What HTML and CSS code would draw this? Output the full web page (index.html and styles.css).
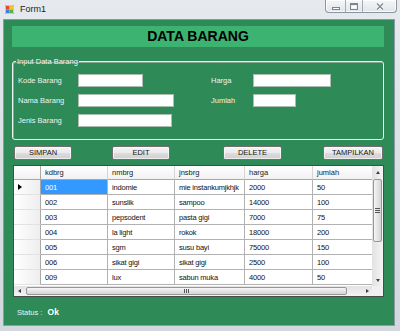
FILE: index.html
```html
<!DOCTYPE html>
<html lang="id">
<head>
    <meta charset="UTF-8">
    <title>Form1</title>
    <link rel="stylesheet" href="styles.css">
</head>
<body>
    <div class="window">
        <div class="titlebar">
            <svg class="app-icon" width="9" height="9" viewBox="0 0 9 9">
                <rect x="0" y="0" width="9" height="9" fill="#f4f4f4" stroke="#7d8a96" stroke-width="0.8"/>
                <rect x="1" y="1" width="3.5" height="3.5" fill="#e2462c"/>
                <rect x="4.5" y="1" width="3.5" height="3.5" fill="#f3c52a"/>
                <rect x="1" y="4.5" width="3.5" height="3.5" fill="#3a7fd6"/>
                <rect x="4.5" y="4.5" width="3.5" height="3.5" fill="#58b24a"/>
            </svg>
            <span class="title">Form1</span>
            <div class="caption-buttons">
                <span class="cap cap-min"><span class="glyph-min"></span></span>
                <span class="cap cap-max"><span class="glyph-max"></span></span>
                <span class="cap cap-close">
                    <svg width="8" height="7" viewBox="0 0 8 7">
                        <path d="M1 0.5 L7 6.5 M7 0.5 L1 6.5" stroke="#ffffff" stroke-width="2.6"/>
                        <path d="M1 0.5 L7 6.5 M7 0.5 L1 6.5" stroke="#7b8590" stroke-width="1.3"/>
                    </svg>
                </span>
            </div>
        </div>

        <div class="client">
            <div class="banner">DATA BARANG</div>

            <fieldset class="groupbox">
                <legend>Input Data Barang</legend>
                <div class="fields">
                    <label>Kode Barang</label>
                    <input type="text" class="txt txt-kode">
                    <label>Harga</label>
                    <input type="text" class="txt txt-harga">

                    <label>Nama Barang</label>
                    <input type="text" class="txt txt-nama">
                    <label>Jumlah</label>
                    <input type="text" class="txt txt-jumlah">

                    <label>Jenis Barang</label>
                    <input type="text" class="txt txt-jenis">
                </div>
            </fieldset>

            <div class="buttons">
                <button class="btn">SIMPAN</button>
                <button class="btn btn-edit">EDIT</button>
                <button class="btn btn-delete">DELETE</button>
                <button class="btn btn-tampil">TAMPILKAN</button>
            </div>

            <div class="datagrid">
                <div class="grid-body">
                    <table>
                        <colgroup>
                            <col class="c-head">
                            <col class="c-kd">
                            <col class="c-nm">
                            <col class="c-jns">
                            <col class="c-hrg">
                            <col class="c-jml">
                        </colgroup>
                        <thead>
                            <tr>
                                <th class="corner"></th>
                                <th>kdbrg</th>
                                <th>nmbrg</th>
                                <th>jnsbrg</th>
                                <th>harga</th>
                                <th>jumlah</th>
                            </tr>
                        </thead>
                        <tbody>
                            <tr>
                                <td class="rowhead"><span class="current"></span></td>
                                <td class="selected">001</td>
                                <td>indomie</td>
                                <td>mie instankumjkhjk</td>
                                <td>2000</td>
                                <td>50</td>
                            </tr>
                            <tr>
                                <td class="rowhead"></td>
                                <td>002</td>
                                <td>sunslik</td>
                                <td>sampoo</td>
                                <td>14000</td>
                                <td>100</td>
                            </tr>
                            <tr>
                                <td class="rowhead"></td>
                                <td>003</td>
                                <td>pepsodent</td>
                                <td>pasta gigi</td>
                                <td>7000</td>
                                <td>75</td>
                            </tr>
                            <tr>
                                <td class="rowhead"></td>
                                <td>004</td>
                                <td>la light</td>
                                <td>rokok</td>
                                <td>18000</td>
                                <td>200</td>
                            </tr>
                            <tr>
                                <td class="rowhead"></td>
                                <td>005</td>
                                <td>sgm</td>
                                <td>susu bayi</td>
                                <td>75000</td>
                                <td>150</td>
                            </tr>
                            <tr>
                                <td class="rowhead"></td>
                                <td>006</td>
                                <td>sikat gigi</td>
                                <td>sikat gigi</td>
                                <td>2500</td>
                                <td>100</td>
                            </tr>
                            <tr>
                                <td class="rowhead"></td>
                                <td>009</td>
                                <td>lux</td>
                                <td>sabun muka</td>
                                <td>4000</td>
                                <td>50</td>
                            </tr>
                        </tbody>
                    </table>
                </div>

                <div class="vscroll">
                    <span class="arrow"><span class="tri-up"></span></span>
                    <div class="vtrack">
                        <div class="vthumb"><span class="grip-h"></span></div>
                    </div>
                    <span class="arrow"><span class="tri-down"></span></span>
                </div>

                <div class="hscroll">
                    <span class="arrow"><span class="tri-left"></span></span>
                    <div class="htrack">
                        <div class="hthumb"><span class="grip-v"></span></div>
                    </div>
                    <span class="arrow"><span class="tri-right"></span></span>
                </div>

                <div class="scroll-corner"></div>
            </div>

            <div class="status">Status : <span class="status-value">Ok</span></div>
        </div>
    </div>
</body>
</html>
```

FILE: styles.css
```css
* {
    box-sizing: border-box;
}

body {
    margin: 0;
    font-family: "Liberation Sans", Arial, sans-serif;
    font-size: 8px;
    background: #ffffff;
}

.window {
    width: 400px;
    height: 331px;
    display: flex;
    flex-direction: column;
    overflow: hidden;
    background: linear-gradient(#e6eaee, #dde2e7 40%, #d2d8de);
}

/* title bar */

.titlebar {
    height: 20px;
    display: flex;
    align-items: flex-start;
    flex-shrink: 0;
}

.app-icon {
    margin: 5px 0 0 5px;
}

.title {
    margin: 4px 0 0 6px;
    font-size: 9px;
    line-height: 11px;
    color: #1b1b1b;
}

.caption-buttons {
    margin-left: auto;
    margin-right: 3px;
    height: 13px;
    display: flex;
    border: 1px solid #8d959e;
    border-top: none;
    border-radius: 0 0 4px 4px;
    background: linear-gradient(#f5f7f9, #dfe5ea);
    box-shadow: inset 0 0 0 1px rgba(255, 255, 255, 0.7);
    overflow: hidden;
}

.cap {
    display: flex;
    align-items: center;
    justify-content: center;
    height: 100%;
}

.cap-min {
    width: 19px;
}

.cap-max {
    width: 17px;
    border-left: 1px solid #a3abb4;
}

.cap-close {
    width: 34px;
    border-left: 1px solid #a3abb4;
}

.glyph-min {
    width: 8px;
    height: 3px;
    margin-top: 5px;
    background: #ffffff;
    border: 1px solid #7b8590;
}

.glyph-max {
    width: 8px;
    height: 7px;
    border: 1px solid #7b8590;
    border-top-width: 2px;
    background: #ffffff;
    box-shadow: inset 0 0 0 1px #eef1f4;
}

/* client area */

.client {
    margin: 0 6px 0 4px;
    height: 305px;
    display: flex;
    flex-direction: column;
    background: #2e8b57;
    box-shadow: 0 0 0 1px #8d99a4;
}

.banner {
    margin: 6px 10px 0 8px;
    height: 21px;
    background: #3cb371;
    color: #000000;
    font-size: 14px;
    font-weight: bold;
    line-height: 21px;
    text-align: center;
}

.groupbox {
    margin: 10px 10px 0 8px;
    padding: 8px 0 12px 5px;
    border: 1px solid #eef3ef;
    border-radius: 3px;
    box-shadow: inset 1px 1px 0 #87a894;
    min-width: 0;
}

.groupbox legend {
    margin-left: -2px;
    padding: 0 1px;
    font-size: 7.5px;
    line-height: 9px;
    color: #f4f4f4;
}

.fields {
    display: grid;
    grid-template-columns: 60px 133px 42px 1fr;
    grid-auto-rows: 13px;
    row-gap: 7px;
    align-items: center;
}

.fields label {
    font-size: 7.5px;
    color: #f2f2f2;
}

.txt {
    height: 13px;
    margin: 0;
    padding: 0;
    border: 1px solid #a9bdb0;
    background: #ffffff;
}

.txt-kode {
    width: 65px;
}

.txt-nama {
    width: 96px;
}

.txt-jenis {
    width: 94px;
}

.txt-harga {
    width: 78px;
}

.txt-jumlah {
    width: 43px;
}

/* buttons */

.buttons {
    margin-top: 6px;
    padding-left: 10px;
    display: flex;
}

.btn {
    width: 58px;
    height: 14px;
    margin: 0;
    padding: 0;
    border: 1px solid #707070;
    border-radius: 2px;
    background: linear-gradient(#f3f3f3 0%, #ebebeb 50%, #dddddd 51%, #cfcfcf 100%);
    box-shadow: inset 0 0 0 1px rgba(255, 255, 255, 0.6);
    font-family: "Liberation Sans", Arial, sans-serif;
    font-size: 7.5px;
    line-height: 12px;
    color: #151515;
}

.btn-edit {
    margin-left: 40px;
}

.btn-delete {
    margin-left: 53px;
    width: 59px;
}

.btn-tampil {
    margin-left: 41px;
    width: 60px;
}

/* data grid */

.datagrid {
    margin: 5px 10px 0 9px;
    height: 132px;
    display: grid;
    grid-template-columns: 1fr 11px;
    grid-template-rows: 1fr 10px;
    border: 1px solid #4a4a4a;
    background: #ababab;
}

.grid-body {
    overflow: hidden;
    background: #ffffff;
}

.grid-body table {
    width: 379px;
    table-layout: fixed;
    border-collapse: separate;
    border-spacing: 0;
}

.c-head {
    width: 27px;
}

.c-kd {
    width: 67px;
}

.c-nm {
    width: 67px;
}

.c-jns {
    width: 70px;
}

.c-hrg {
    width: 68px;
}

.c-jml {
    width: 80px;
}

.grid-body th {
    height: 14px;
    padding: 0 0 0 4px;
    border-right: 1px solid #d6d6d6;
    border-bottom: 1px solid #a8a8a8;
    background: linear-gradient(#ffffff, #f1f1f1);
    font-weight: normal;
    font-size: 7.5px;
    text-align: left;
    color: #1a1a1a;
    white-space: nowrap;
    overflow: hidden;
}

.grid-body th.corner {
    border-right-color: #a8a8a8;
}

.grid-body td {
    height: 15px;
    padding: 0 0 0 4px;
    border-right: 1px solid #b2b2b2;
    border-bottom: 1px solid #b2b2b2;
    font-size: 7.5px;
    letter-spacing: -0.2px;
    color: #111111;
    white-space: nowrap;
    overflow: hidden;
}

.grid-body td.rowhead {
    padding-left: 4px;
    border-right-color: #a8a8a8;
    border-bottom-color: #e2e2e2;
    background: linear-gradient(to right, #ffffff, #eeeeee);
}

.grid-body td.selected {
    background: #3399ff;
    color: #ffffff;
}

.current {
    display: block;
    width: 0;
    height: 0;
    border-top: 3px solid transparent;
    border-bottom: 3px solid transparent;
    border-left: 4px solid #000000;
}

/* scrollbars */

.vscroll {
    display: flex;
    flex-direction: column;
    background: linear-gradient(to right, #e2e2e2, #f4f4f4);
}

.hscroll {
    display: flex;
    background: linear-gradient(#e2e2e2, #f4f4f4);
}

.vscroll .arrow {
    height: 12px;
    display: flex;
    align-items: center;
    justify-content: center;
    flex-shrink: 0;
}

.hscroll .arrow {
    width: 10px;
    display: flex;
    align-items: center;
    justify-content: center;
    flex-shrink: 0;
}

.tri-up {
    border-left: 2.5px solid transparent;
    border-right: 2.5px solid transparent;
    border-bottom: 3px solid #404040;
}

.tri-down {
    border-left: 2.5px solid transparent;
    border-right: 2.5px solid transparent;
    border-top: 3px solid #404040;
}

.tri-left {
    border-top: 2.5px solid transparent;
    border-bottom: 2.5px solid transparent;
    border-right: 3px solid #404040;
}

.tri-right {
    border-top: 2.5px solid transparent;
    border-bottom: 2.5px solid transparent;
    border-left: 3px solid #404040;
}

.vtrack {
    flex: 1;
    padding: 1px 1px 0;
}

.htrack {
    flex: 1;
    padding: 1px 0 1px 2px;
}

.vthumb {
    height: 63px;
    display: flex;
    align-items: center;
    justify-content: center;
    border: 1px solid #979797;
    border-radius: 2px;
    background: linear-gradient(to right, #f6f6f6, #e4e4e4 50%, #d4d4d4);
}

.hthumb {
    width: 321px;
    height: 100%;
    display: flex;
    align-items: center;
    justify-content: center;
    border: 1px solid #979797;
    border-radius: 2px;
    background: linear-gradient(#f6f6f6, #e4e4e4 50%, #d4d4d4);
}

.grip-h {
    width: 5px;
    height: 5px;
    background: repeating-linear-gradient(#555555 0, #555555 1px, transparent 1px, transparent 2px);
}

.grip-v {
    width: 5px;
    height: 4px;
    background: repeating-linear-gradient(to right, #555555 0, #555555 1px, transparent 1px, transparent 2px);
}

.scroll-corner {
    background: #f0f0f0;
}

/* status */

.status {
    margin-top: 10px;
    padding-left: 13px;
    font-size: 7.5px;
    line-height: 10px;
    color: #f2f2f2;
}

.status-value {
    margin-left: 3px;
    font-size: 8.5px;
    font-weight: bold;
    color: #ffffff;
}
```
